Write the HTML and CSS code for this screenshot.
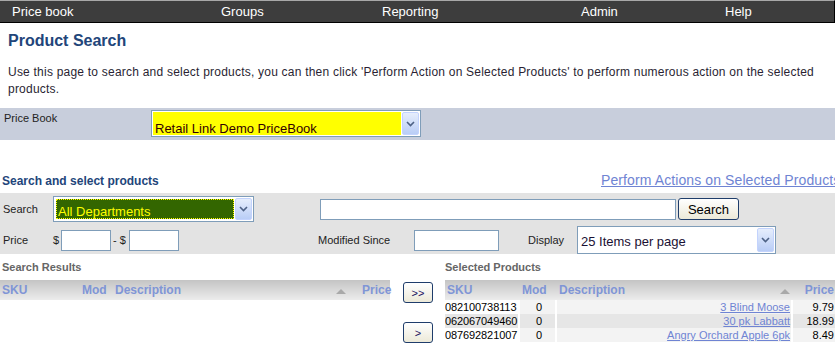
FILE: index.html
```html
<!DOCTYPE html>
<html lang="en">
<head>
    <meta charset="UTF-8">
    <title>Product Search</title>
    <link rel="stylesheet" href="styles.css">
</head>
<body>

    <!-- Top menu -->
    <div class="topnav">
        <a href="#">Price book</a>
        <a href="#">Groups</a>
        <a href="#">Reporting</a>
        <a href="#">Admin</a>
        <a href="#">Help</a>
    </div>

    <h1 class="page-title">Product Search</h1>
    <p class="intro">Use this page to search and select products, you can then click 'Perform Action on Selected Products' to perform numerous action on the selected products.</p>

    <!-- Price book picker -->
    <div class="pricebook-bar">
        <span class="bar-label">Price Book</span>
        <div class="select-box select-yellow">
            <span class="select-value">Retail Link Demo PriceBook</span>
            <span class="select-arrow"><svg width="9" height="6" viewBox="0 0 9 6"><path d="M1 1 L4.5 4.5 L8 1" fill="none" stroke="#4d6185" stroke-width="1.6"/></svg></span>
        </div>
    </div>

    <div class="section-head">
        <span class="section-title">Search and select products</span>
        <a href="#" class="action-link">Perform Actions on Selected Products</a>
    </div>

    <!-- Search filters -->
    <div class="search-panel">
        <div class="search-row">
            <span class="field-label">Search</span>
            <div class="select-box select-green">
                <span class="select-value">All Departments</span>
                <span class="select-arrow"><svg width="9" height="6" viewBox="0 0 9 6"><path d="M1 1 L4.5 4.5 L8 1" fill="none" stroke="#4d6185" stroke-width="1.6"/></svg></span>
            </div>
            <input type="text" class="keyword-input">
            <button class="btn btn-search">Search</button>
        </div>
        <div class="search-row">
            <span class="field-label">Price</span>
            <span class="dollar">$</span>
            <input type="text" class="price-input">
            <span class="dash">- $</span>
            <input type="text" class="price-input">
            <span class="small-label modified-label">Modified Since</span>
            <input type="text" class="date-input">
            <span class="small-label display-label">Display</span>
            <div class="select-box select-display">
                <span class="select-value">25 Items per page</span>
                <span class="select-arrow"><svg width="9" height="6" viewBox="0 0 9 6"><path d="M1 1 L4.5 4.5 L8 1" fill="none" stroke="#4d6185" stroke-width="1.6"/></svg></span>
            </div>
        </div>
    </div>

    <!-- Result lists -->
    <div class="lists">
        <div class="list-col">
            <div class="list-title">Search Results</div>
            <table class="grid results-grid">
                <thead>
                    <tr>
                        <th class="c-sku">SKU</th>
                        <th class="c-mod">Mod</th>
                        <th class="c-desc">Description <span class="sort"></span></th>
                        <th class="c-price">Price</th>
                    </tr>
                </thead>
            </table>
        </div>

        <div class="move-col">
            <button class="btn btn-move">&gt;&gt;</button>
            <button class="btn btn-move">&gt;</button>
        </div>

        <div class="list-col">
            <div class="list-title">Selected Products</div>
            <table class="grid selected-grid">
                <thead>
                    <tr>
                        <th class="c-sku">SKU</th>
                        <th class="c-mod">Mod</th>
                        <th class="c-desc">Description <span class="sort"></span></th>
                        <th class="c-price">Price</th>
                    </tr>
                </thead>
                <tbody>
                    <tr>
                        <td class="c-sku">082100738113</td>
                        <td class="c-mod">0</td>
                        <td class="c-desc"><a href="#">3 Blind Moose</a></td>
                        <td class="c-price">9.79</td>
                    </tr>
                    <tr>
                        <td class="c-sku">062067049460</td>
                        <td class="c-mod">0</td>
                        <td class="c-desc"><a href="#">30 pk Labbatt</a></td>
                        <td class="c-price">18.99</td>
                    </tr>
                    <tr>
                        <td class="c-sku">087692821007</td>
                        <td class="c-mod">0</td>
                        <td class="c-desc"><a href="#">Angry Orchard Apple 6pk</a></td>
                        <td class="c-price">8.49</td>
                    </tr>
                </tbody>
            </table>
        </div>
    </div>

</body>
</html>
```

FILE: styles.css
```css
/* Base */
:root {
    --title-blue: #22457a;
    --link-blue: #6f84d3;
    --head-blue: #7f95d6;
    --field-border: #7f9db9;
    --bar-bg: #c8cedc;
    --panel-bg: #e3e3e3;
}

* {
    box-sizing: border-box;
}

body {
    margin: 0;
    width: 835px;
    font-family: "Liberation Sans", Arial, sans-serif;
    color: #222;
    background: #fff;
    overflow: hidden;
}

/* Top menu */
.topnav {
    display: grid;
    grid-template-columns: 209px 161px 199px 144px 1fr;
    height: 23px;
    padding-left: 12px;
    background: #3d3d3d;
    border-top: 1px solid #a8a8a8;
    border-bottom: 1px solid #000;
    border-right: 1px solid #000;
    line-height: 21px;
    font-size: 13px;
}

.topnav a {
    color: #fff;
    text-decoration: none;
}

.page-title {
    margin: 0;
    padding: 9px 8px 0;
    font-size: 16px;
    line-height: 18px;
    color: var(--title-blue);
}

.intro {
    margin: 14px 0 10px;
    padding: 0 8px;
    font-size: 12px;
    line-height: 17px;
    letter-spacing: 0.22px;
    color: #2a1f33;
}

/* Price book bar */
.pricebook-bar {
    display: flex;
    height: 32px;
    padding: 2px 0 0 4px;
    background: var(--bar-bg);
}

.bar-label {
    width: 147px;
    padding-top: 2px;
    font-size: 11px;
    color: #222;
}

/* Fake selects */
.select-box {
    display: flex;
    border: 1px solid var(--field-border);
    background: #fff;
}

.select-value {
    flex: 1;
    font-size: 13px;
    white-space: nowrap;
    overflow: hidden;
}

.select-arrow {
    display: flex;
    align-items: center;
    justify-content: center;
    width: 17px;
    margin: 1px;
    border: 1px solid #c3d3fd;
    border-radius: 2px;
    background: linear-gradient(#e6eefc, #b9cdf6);
}

.select-yellow {
    width: 270px;
    height: 27px;
}

.select-yellow .select-value {
    margin: 1px 0 1px 1px;
    padding: 9px 0 0 2px;
    background: #ffff00;
    color: #330000;
}

.select-green {
    width: 201px;
    height: 26px;
}

.select-green .select-value {
    margin: 2px 0 2px 2px;
    padding: 5px 0 0 2px;
    background: #336600;
    color: #ffff00;
    outline: 1px dotted #ffff00;
    outline-offset: -1px;
}

.select-display {
    width: 199px;
    height: 28px;
}

.select-display .select-value {
    padding: 7px 0 0 3px;
    color: #1a1033;
}

/* Section heading */
.section-head {
    display: flex;
    align-items: baseline;
    height: 53px;
    padding: 32px 0 0 2px;
    white-space: nowrap;
}

.section-title {
    flex: none;
    width: 599px;
    font-size: 12px;
    font-weight: bold;
    color: var(--title-blue);
}

.action-link {
    flex: none;
    font-size: 14px;
    letter-spacing: 0.1px;
    color: var(--link-blue);
}

/* Search panel */
.search-panel {
    height: 61px;
    padding: 3px 0 0 3px;
    background: var(--panel-bg);
}

.search-row {
    display: flex;
    align-items: center;
    font-size: 11px;
    color: #222;
}

.search-row + .search-row {
    margin-top: 4px;
}

.field-label {
    width: 50px;
}

input[type="text"] {
    height: 21px;
    border: 1px solid var(--field-border);
    background: #fff;
    padding: 0 2px;
    font-size: 12px;
}

.keyword-input {
    width: 356px;
    margin-left: 66px;
}

.btn {
    border: 1px solid #1f3d6b;
    border-radius: 3px;
    background: linear-gradient(#ffffff, #ece9d8);
    font-family: "Liberation Sans", Arial, sans-serif;
    color: #000;
    padding: 0;
}

.btn-search {
    width: 61px;
    height: 22px;
    margin-left: 2px;
    font-size: 13px;
}

.dollar {
    width: 8px;
}

.price-input {
    width: 50px;
}

.dash {
    width: 18px;
    padding-left: 2px;
}

.modified-label {
    margin-left: 139px;
    width: 96px;
}

.date-input {
    width: 85px;
}

.display-label {
    margin-left: 29px;
    width: 49px;
}

/* Lists */
.lists {
    display: flex;
    padding-top: 6px;
}

.list-col {
    width: 390px;
}

.list-title {
    height: 20px;
    padding: 1px 0 0 2px;
    font-size: 11px;
    font-weight: bold;
    color: #666;
}

.move-col {
    display: flex;
    flex-direction: column;
    gap: 19px;
    width: 55px;
    padding: 22px 0 0 13px;
}

.move-col + .list-col .list-title {
    padding-left: 0;
}

.btn-move {
    width: 30px;
    height: 21px;
    font-size: 11px;
    color: #1a1060;
}

.grid {
    width: 390px;
    border-collapse: separate;
    border-spacing: 0;
    table-layout: fixed;
    font-size: 11px;
}

.grid th {
    height: 20px;
    padding: 0 2px;
    background: linear-gradient(#c4c4c4, #ececec);
    color: var(--head-blue);
    font-size: 12px;
    font-weight: bold;
    text-align: left;
    white-space: nowrap;
}

.grid th.c-price {
    text-align: right;
    padding-right: 1px;
}

/* sort marker */
.grid .sort {
    float: right;
    width: 0;
    height: 0;
    margin: 6px 12px 0 0;
    border-left: 5px solid transparent;
    border-right: 5px solid transparent;
    border-bottom: 5px solid #a9a9a9;
}

.selected-grid .sort {
    margin-right: 1px;
}

.results-grid .c-sku { width: 80px; }
.results-grid .c-mod { width: 33px; }
.results-grid .c-price { width: 30px; }

.selected-grid .c-sku { width: 75px; }
.selected-grid .c-mod { width: 37px; }
.selected-grid .c-price { width: 42px; }

.grid td {
    height: 14px;
    padding: 0 1px;
    line-height: 14px;
    border-right: 2px solid #fff;
    background: #f3f3f3;
    color: #000;
    white-space: nowrap;
    overflow: hidden;
}

.grid td.c-sku {
    padding: 0;
    letter-spacing: -0.1px;
}

.grid td:last-child {
    border-right: none;
}

.grid tbody tr:nth-child(odd) td.c-sku {
    background: #fff;
}

.grid tbody tr:nth-child(even) td {
    background: #e6e6e6;
}

.grid td.c-mod {
    padding-left: 16px;
}

.grid td.c-desc,
.grid td.c-price {
    text-align: right;
}

.grid td a {
    color: var(--link-blue);
}
```
